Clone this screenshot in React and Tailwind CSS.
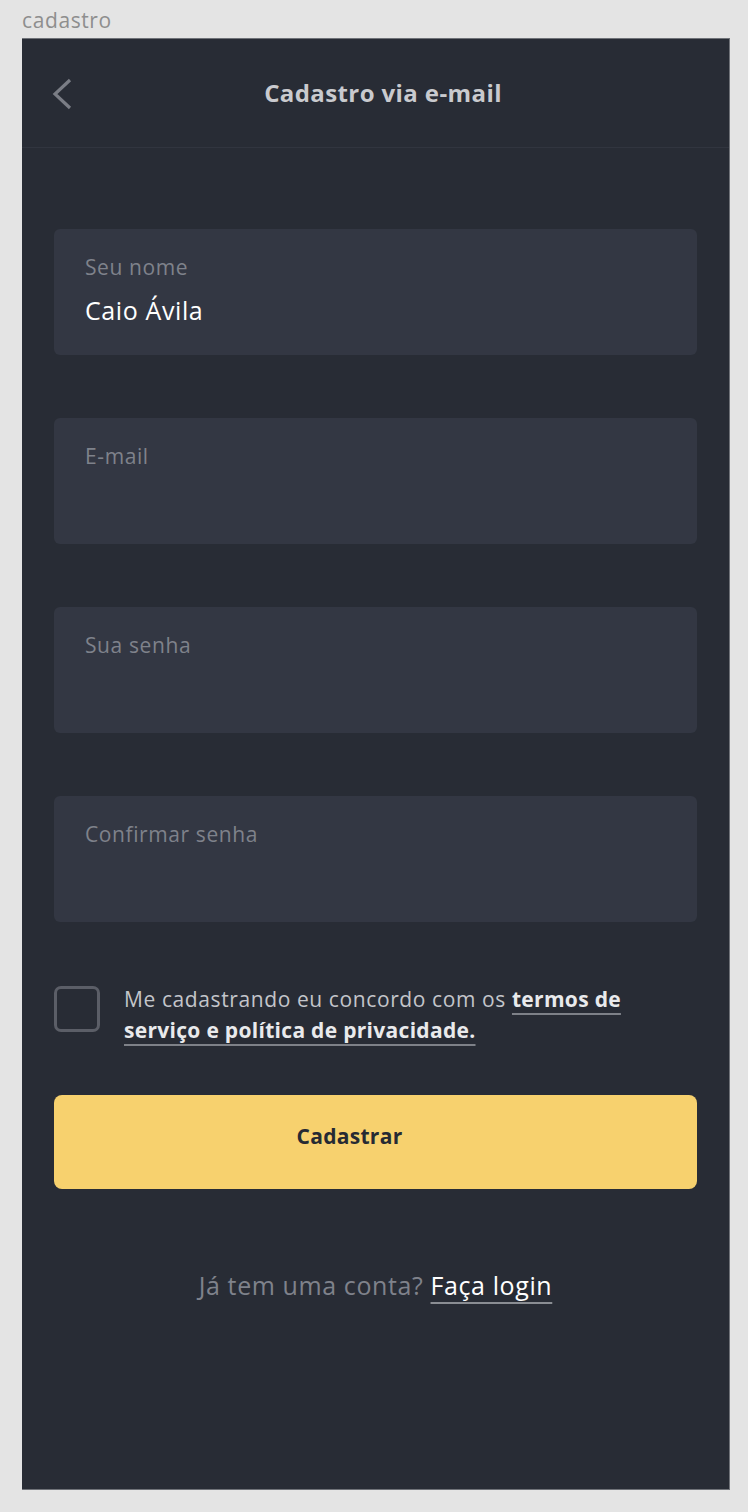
import React from "react";

function Field({ label, value }) {
  return (
    <div className="h-[126px] w-full rounded-[6px] bg-[#333743] px-[31px] pt-[24px]">
      <div className="text-[21px] leading-[28px] tracking-[0.6px] text-[#7f828b]">{label}</div>
      {value ? (
        <div className="mt-[13px] text-[25px] leading-[32px] tracking-[0.6px] text-white">{value}</div>
      ) : null}
    </div>
  );
}

export default function App() {
  return (
    <div
      className="min-h-[1512px] w-[748px] bg-[#e4e4e4] pl-[22px] pr-[18px]"
      style={{ fontFamily: "'Open Sans', sans-serif" }}
    >
      <div className="pt-[6px] h-[38px] text-[21px] leading-[28px] tracking-[0.6px] text-[#8e8e8e]">cadastro</div>
      <div className="flex h-[1452px] w-[708px] flex-col border-t border-r border-b border-[#6f7278] bg-[#282c35]">
        <div className="relative flex h-[109px] items-center justify-center border-b border-[#31353f] pl-[15px]">
          <svg
            className="absolute left-[29px] top-[39px]"
            width="22"
            height="32"
            viewBox="0 0 22 32"
            fill="none"
          >
            <path d="M19 2 L4 16 L19 30" stroke="#7a7d85" strokeWidth="3.2" strokeLinecap="butt" strokeLinejoin="miter" />
          </svg>
          <div className="text-[24px] font-bold tracking-[0.4px] text-[#c9cace]">Cadastro via e-mail</div>
        </div>
        <div className="flex flex-col px-[32px] pt-[81px]">
          <div className="flex flex-col gap-[63px]">
            <Field label="Seu nome" value="Caio Ávila" />
            <Field label="E-mail" />
            <Field label="Sua senha" />
            <Field label="Confirmar senha" />
          </div>
          <div className="mt-[64px] flex items-start gap-[24px]">
            <div className="h-[46px] w-[46px] shrink-0 rounded-[7px] border-[3px] border-[#5b5e67]" />
            <div className="mt-[-2px] pr-[60px] text-[21px] leading-[31px] tracking-[0.6px] text-[#c3c5ca]">
              Me cadastrando eu concordo com os{" "}
              <span className="font-bold tracking-[0.3px] text-[#e9eaec] underline decoration-[#7e8188] decoration-[1.5px] underline-offset-[6px]">
                termos de serviço e política de privacidade.
              </span>
            </div>
          </div>
          <div className="mt-[49px] flex h-[94px] items-center justify-center rounded-[8px] bg-[#f7d16e] pb-[11px] pr-[52px] text-[21px] font-bold tracking-[0.3px] text-[#262a33]">
            Cadastrar
          </div>
          <div className="mt-[78px] text-center text-[25px] tracking-[0.6px] text-[#7f828b]">
            Já tem uma conta?{" "}
            <span className="text-white underline decoration-[#8a8d93] decoration-[1.5px] underline-offset-[7px]">
              Faça login
            </span>
          </div>
        </div>
      </div>
    </div>
  );
}
